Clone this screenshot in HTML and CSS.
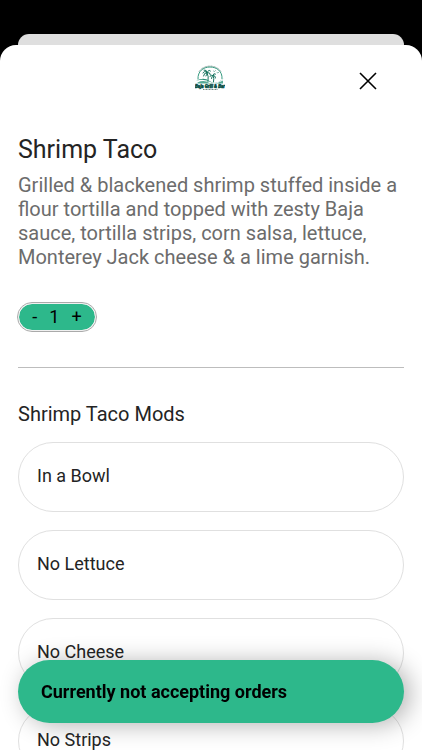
FILE: index.html
```html
<!DOCTYPE html>
<html lang="en">
<head>
<meta charset="utf-8">
<meta name="viewport" content="width=device-width, initial-scale=1">
<title>Shrimp Taco</title>
<link rel="stylesheet" href="styles.css">
</head>
<body>
<div class="screen">
  <div class="backdrop-card"></div>
  <main class="sheet">
    <header class="sheet-header">
      <svg class="logo" viewBox="0 0 60 56" role="img" aria-label="Baja Grill &amp; Bar">
        <path d="M8 17A26 23 0 0 1 52 17" fill="none" stroke="#7f9793" stroke-width="2" stroke-dasharray="2 1"/>
        <path d="M6 33C5 16 17 8 30 8S55 16 54 32" fill="none" stroke="#369a80" stroke-width="2"/>
        <g fill="none" stroke="#17745f" stroke-width="2" stroke-linecap="round">
          <path d="M24 19Q28 27 26 37M36 25Q39 31 37 38"/>
          <path d="M24 19Q19 14 16 20M24 19Q18 19 17 26M24 19Q24 13 18 14M24 19Q28 12 31 16M24 19Q31 18 31 24M24 19Q24 23 22 26"/>
          <path d="M36 25Q32 22 30 27M36 25Q37 19 41 22M36 25Q42 25 41 30M36 25Q33 27 33 31"/>
          <path d="M37 16l2 1 2-2M44 19l2 1 2-2" stroke-width="1"/>
        </g>
        <path d="M2 36Q17 27 29 36T58 30Q48 41 33 39Q17 30 2 36Z" fill="#299078"/>
        <path d="M5 39Q18 33 29 40Q43 43 56 35V41H5Z" fill="#55a995"/>
        <text class="logo-name" x="30" y="49" text-anchor="middle">Baja Grill &amp; Bar</text>
        <path d="M16 53H45" stroke="#728984" stroke-width="2" stroke-dasharray="2 1"/>
      </svg>
      <button class="close" type="button" aria-label="Close">
        <svg viewBox="0 0 18 18" aria-hidden="true"><path d="M1 1L17 17M17 1L1 17"/></svg>
      </button>
    </header>
    <section class="product">
      <h1>Shrimp Taco</h1>
      <p>Grilled &amp; blackened shrimp stuffed inside a flour tortilla and topped with zesty Baja sauce, tortilla strips, corn salsa, lettuce, Monterey Jack cheese &amp; a lime garnish.</p>
      <div class="stepper" role="group" aria-label="Quantity">
        <button type="button" aria-label="Decrease quantity">-</button>
        <output>1</output>
        <button type="button" aria-label="Increase quantity">+</button>
      </div>
    </section>
    <section class="mods">
      <h2>Shrimp Taco Mods</h2>
      <div class="options">
        <button class="option" type="button">In a Bowl</button>
        <button class="option" type="button">No Lettuce</button>
        <button class="option" type="button">No Cheese</button>
        <button class="option" type="button">No Strips</button>
      </div>
    </section>
  </main>
  <button class="order-bar" type="button">Currently not accepting orders</button>
</div>
</body>
</html>
```
FILE: styles.css
```css
* {
  box-sizing: border-box;
}

body {
  margin: 0;
  background: #000;
  color: #242424;
  font-family: Roboto, sans-serif;
}

button {
  margin: 0;
  padding: 0;
  border: 0;
  background: none;
  color: inherit;
  font: inherit;
}

.screen {
  display: flex;
  flex-direction: column;
  height: 100vh;
  padding-top: 34px;
  overflow: hidden;
}

.backdrop-card {
  flex: none;
  height: 11px;
  margin: 0 18px;
  border-radius: 11px 11px 0 0;
  background: #dfdfdf;
}

.sheet {
  flex: 1;
  min-height: 0;
  padding: 0 18px;
  overflow: hidden;
  border-radius: 16px 16px 0 0;
  background: #fff;
}

.sheet-header {
  display: grid;
  grid-template-columns: 1fr 32px 1fr;
  align-items: start;
  padding-top: 18px;
}

.logo {
  grid-column: 2;
  width: 30px;
  height: 28px;
}

.logo-name {
  fill: #0c5147;
  stroke: #0c5147;
  stroke-width: 1px;
  font-size: 9px;
  font-weight: 900;
  font-style: italic;
}

.close {
  justify-self: end;
  display: grid;
  place-items: center;
  width: 36px;
  height: 36px;
  margin-right: 18px;
}

.close svg {
  width: 18px;
  height: 18px;
  fill: none;
  stroke: #000;
  stroke-width: 1.6;
}

.product {
  padding: 35px 0 36px;
  border-bottom: 1px solid #bdbdbd;
}

h1,
h2,
p {
  margin: 0;
  font-weight: 400;
}

h1 {
  font-size: 25px;
  line-height: 31px;
}

p {
  margin-top: 8px;
  color: #6c6c6c;
  font-size: 20px;
  line-height: 24px;
}

.stepper {
  display: inline-flex;
  align-items: center;
  justify-content: center;
  gap: 12px;
  width: 78px;
  height: 28px;
  margin-top: 34px;
  border: 1px solid #f0f0f0;
  border-radius: 14px;
  outline: 1px solid #aaa;
  background: #2db88b;
  background-clip: padding-box;
  color: #000;
  font-size: 18px;
  line-height: 24px;
}

.mods {
  padding-top: 34px;
}

h2 {
  font-size: 20px;
  line-height: 24px;
}

.options {
  display: grid;
  gap: 18px;
  margin-top: 16px;
}

.option {
  height: 70px;
  padding: 0 18px 3px;
  border: 1px solid #e0e0e0;
  border-radius: 35px;
  font-size: 18px;
  text-align: left;
}

.order-bar {
  position: fixed;
  right: 18px;
  bottom: 27px;
  left: 18px;
  height: 63px;
  padding: 0 23px;
  border-radius: 32px;
  background: #2db88b;
  box-shadow: 6px 2px 24px rgba(0, 0, 0, 0.3);
  color: #000;
  font-size: 18px;
  font-weight: 700;
  text-align: left;
}
```
